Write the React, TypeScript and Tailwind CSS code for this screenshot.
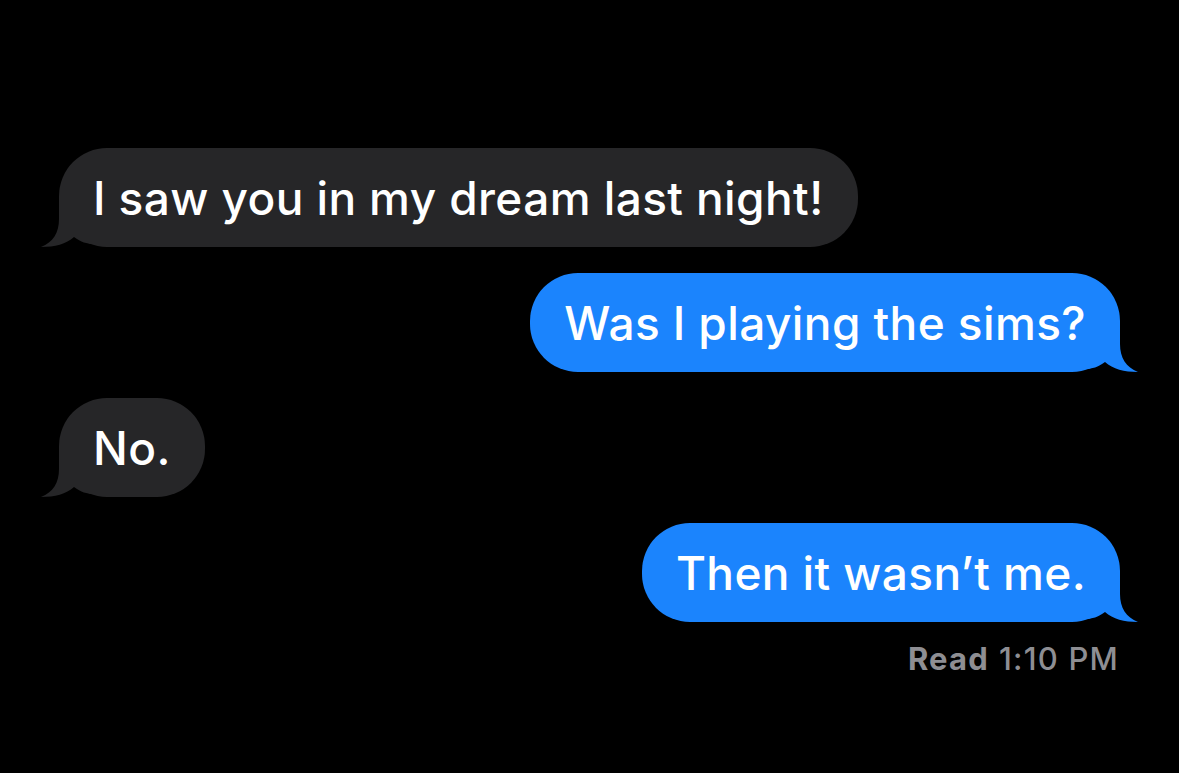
import React from 'react';

type Side = 'left' | 'right';

function Tail({ side, color }: { side: Side; color: string }) {
  if (side === 'left') {
    return (
      <svg
        className="absolute bottom-0 -left-[18px]"
        width="52"
        height="50"
        viewBox="0 0 52 50"
        fill={color}
      >
        <path d="M18 0 L18 22 C18 36 12 45 0 50 C14 50 25 47 33 40 C40 45 46 47 52 47 L52 0 Z" />
      </svg>
    );
  }
  return (
    <svg
      className="absolute bottom-0 -right-[18px]"
      width="52"
      height="50"
      viewBox="0 0 52 50"
      fill={color}
    >
      <path d="M34 0 L34 22 C34 36 40 45 52 50 C38 50 27 47 19 40 C12 45 6 47 0 47 L0 0 Z" />
    </svg>
  );
}

function Bubble({ side, children }: { side: Side; children: React.ReactNode }) {
  const color = side === 'left' ? '#262628' : '#1b84fd';
  return (
    <div className={side === 'left' ? 'flex justify-start' : 'flex justify-end'}>
      <div
        className={
          'relative h-[99px] rounded-[48px] px-[34px] flex items-center text-white text-[46px] font-medium leading-none tracking-[0.4px] ' +
          (side === 'left' ? 'bg-[#262628]' : 'bg-[#1b84fd]')
        }
      >
        <Tail side={side} color={color} />
        <span className="relative">{children}</span>
      </div>
    </div>
  );
}

export default function App() {
  return (
    <div
      className="w-[1179px] h-[773px] bg-black overflow-hidden pt-[148px] pl-[59px] pr-[59px]"
      style={{ fontFamily: 'Inter, "Open Sans", sans-serif' }}
    >
      <div className="flex flex-col gap-[26px]">
        <Bubble side="left">I saw you in my dream last night!</Bubble>
        <Bubble side="right">Was I playing the sims?</Bubble>
        <Bubble side="left">No.</Bubble>
        <Bubble side="right">Then it wasn’t me.</Bubble>
      </div>
      <div className="flex justify-end pt-[21px] pr-[1px] text-[31px] leading-none tracking-[1.2px] text-[#8e8e93]">
        <span className="font-bold">Read</span>
        <span className="ml-[10px] font-medium">1:10 PM</span>
      </div>
    </div>
  );
}
